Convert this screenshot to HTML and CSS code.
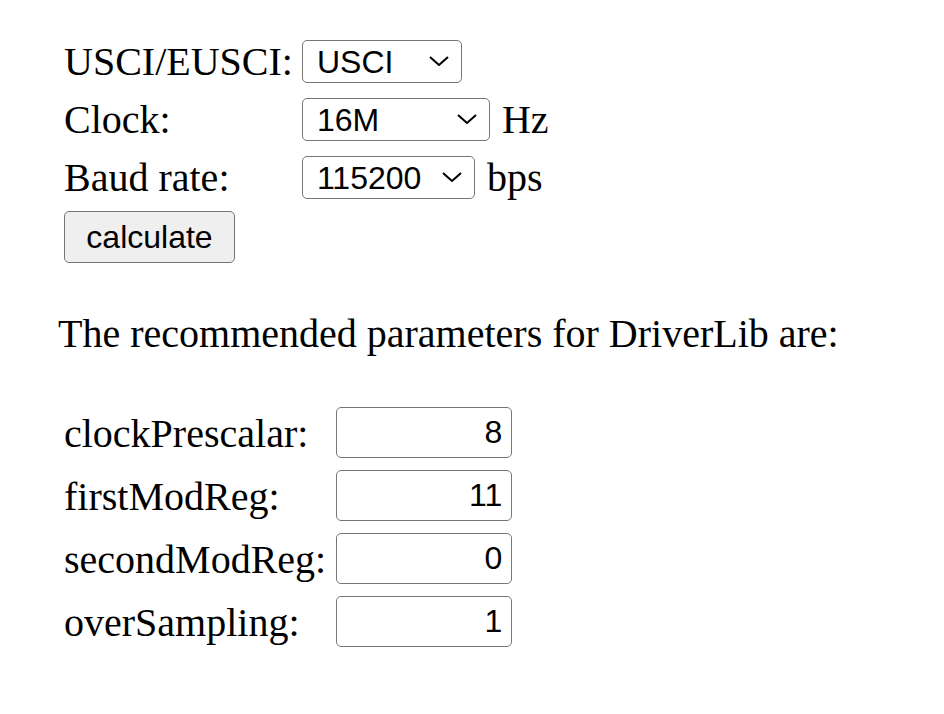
FILE: index.html
```html
<!DOCTYPE html>
<html lang="en">
<head>
  <meta charset="UTF-8" />
  <title>MSP430 UART Baud Rate Calculator</title>
  <link rel="stylesheet" href="styles.css">
</head>
<body>
  <div class="settings">
    <label for="module">USCI/EUSCI:</label>
    <div class="field">
      <div class="pick w-module">
        <select id="module">
          <option>USCI</option>
          <option>EUSCI</option>
        </select>
        <svg class="chev" viewBox="0 0 20 10"><path d="M1 1 L10 9 L19 1" /></svg>
      </div>
    </div>

    <label for="clock">Clock:</label>
    <div class="field">
      <div class="pick w-clock">
        <select id="clock">
          <option>1M</option>
          <option>4M</option>
          <option>8M</option>
          <option selected>16M</option>
          <option>20M</option>
          <option>32768</option>
        </select>
        <svg class="chev" viewBox="0 0 20 10"><path d="M1 1 L10 9 L19 1" /></svg>
      </div>
      <span>Hz</span>
    </div>

    <label for="baud">Baud rate:</label>
    <div class="field">
      <div class="pick w-baud">
        <select id="baud">
          <option>9600</option>
          <option>19200</option>
          <option>38400</option>
          <option>57600</option>
          <option selected>115200</option>
        </select>
        <svg class="chev" viewBox="0 0 20 10"><path d="M1 1 L10 9 L19 1" /></svg>
      </div>
      <span>bps</span>
    </div>
  </div>

  <button type="button" id="calc" class="btn">calculate</button>

  <p class="intro">The recommended parameters for DriverLib are:</p>

  <div class="results">
    <label for="prescalar">clockPrescalar:</label>
    <input type="text" id="prescalar" value="8" readonly />

    <label for="firstMod">firstModReg:</label>
    <input type="text" id="firstMod" value="11" readonly />

    <label for="secondMod">secondModReg:</label>
    <input type="text" id="secondMod" value="0" readonly />

    <label for="overSampling">overSampling:</label>
    <input type="text" id="overSampling" value="1" readonly />
  </div>
</body>
</html>
```

FILE: styles.css
```css
body {
  margin: 0;
  padding: 40px 58px;
  font-family: "Liberation Serif", "Times New Roman", serif;
  font-size: 40px;
  color: #000;
  background: #fff;
}
.settings {
  display: grid;
  grid-template-columns: max-content max-content;
  column-gap: 9px;
  row-gap: 15px;
  align-items: center;
  padding-left: 6px;
  line-height: 43px;
}
.results label {
  line-height: 43px;
  padding-top: 2px;
}
.field {
  display: flex;
  align-items: center;
  gap: 12px;
  height: 43px;
}
.pick {
  position: relative;
  height: 43px;
}
.pick select {
  appearance: none;
  -webkit-appearance: none;
  display: block;
  width: 100%;
  height: 43px;
  margin: 0;
  padding: 0 0 0 14px;
  font-family: "Liberation Sans", Arial, sans-serif;
  font-size: 32px;
  color: #000;
  background: #fff;
  border: 1px solid #767676;
  border-radius: 5px;
  box-sizing: border-box;
}
.chev {
  position: absolute;
  right: 13px;
  top: 16px;
  width: 20px;
  height: 10px;
  pointer-events: none;
}
.chev path {
  fill: none;
  stroke: #000;
  stroke-width: 2;
}
.w-module { width: 160px; }
.w-clock { width: 188px; }
.w-baud { width: 173px; }
.btn {
  display: block;
  margin: 12px 0 0 6px;
  width: 171px;
  height: 52px;
  padding: 0;
  font-family: "Liberation Sans", Arial, sans-serif;
  font-size: 32px;
  color: #000;
  background: #efefef;
  border: 1px solid #767676;
  border-radius: 5px;
  box-sizing: border-box;
}
.intro {
  margin: 47px 0 50px;
}
.results {
  display: grid;
  grid-template-columns: max-content max-content;
  column-gap: 10px;
  row-gap: 12px;
  align-items: center;
  padding-left: 6px;
}
.results input {
  width: 176px;
  height: 51px;
  margin: 0;
  padding: 0 9px;
  font-family: "Liberation Sans", Arial, sans-serif;
  font-size: 32px;
  text-align: right;
  color: #000;
  border: 1px solid #767676;
  border-radius: 5px;
  box-sizing: border-box;
}
```
